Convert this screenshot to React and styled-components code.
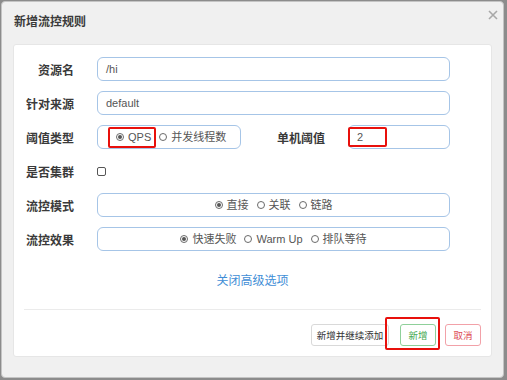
import styled, { createGlobalStyle } from "styled-components";

const GlobalStyle = createGlobalStyle`
  html, body {
    margin: 0;
    padding: 0;
    background: #8c8c8c;
  }
  * {
    box-sizing: border-box;
  }
`;

const CJK = `"Liberation Sans", "Noto Sans CJK SC", sans-serif`;

const Modal = styled.div`
  width: 503px;
  height: 377px;
  margin: 1px 0 0 1px;
  background: #f0f0f0;
  border: 1px solid #c4c4c4;
  border-radius: 4px;
  display: flex;
  flex-direction: column;
  padding: 0 11px 20px 11px;
  font-family: ${CJK};
`;

const Header = styled.div`
  height: 42px;
  display: flex;
  justify-content: space-between;
  align-items: flex-start;
`;

const Title = styled.h4`
  margin: 12px 0 0 1px;
  font-size: 12px;
  line-height: 16px;
  font-weight: 700;
  color: #3a3a3a;
`;

const Close = styled.button`
  border: none;
  background: none;
  padding: 0;
  margin: 8px -6px 0 0;
  width: 10px;
  height: 10px;
  display: flex;
  cursor: pointer;
`;

const Panel = styled.div`
  flex: 1;
  background: #fff;
  border: 1px solid #e6e6e6;
  border-radius: 3px;
  padding: 12px 10px 10px 10px;
  display: flex;
  flex-direction: column;
`;

const Form = styled.div`
  display: flex;
  flex-direction: column;
  gap: 10px;
  padding-right: 31px;
`;

const Row = styled.div`
  display: flex;
  align-items: center;
  height: 24px;
`;

const Label = styled.label`
  width: ${(p) => p.$width || 50}px;
  flex-shrink: 0;
  margin-right: 23px;
  text-align: right;
  font-size: 12px;
  font-weight: 700;
  color: #3a3a3a;
  white-space: nowrap;
`;

const Field = styled.div`
  flex: ${(p) => (p.$width ? "none" : 1)};
  width: ${(p) => (p.$width ? `${p.$width}px` : "auto")};
  height: 24px;
  border: 1px solid #a6c5e7;
  border-radius: 6px;
  display: flex;
  align-items: center;
  justify-content: ${(p) => (p.$center ? "center" : "flex-start")};
  padding-left: ${(p) => p.$pad ?? 8}px;
  gap: 8px;
  font-size: 11px;
  color: #555;
`;

const Marked = styled.span`
  position: relative;
  display: inline-flex;
  align-items: center;
  line-height: 14px;
  &::after {
    content: "";
    position: absolute;
    inset: ${(p) => p.$inset};
    border: 2px solid #e8100c;
    border-radius: 2px;
  }
`;

const Option = styled.span`
  display: inline-flex;
  align-items: center;
  gap: 4px;
  font-size: 11px;
  line-height: 14px;
  color: #555;
  white-space: nowrap;
`;

const Dot = styled.span`
  width: 8px;
  height: 8px;
  border: 1px solid #6a6a6a;
  border-radius: 50%;
  display: inline-flex;
  align-items: center;
  justify-content: center;
  &::after {
    content: "";
    width: 4px;
    height: 4px;
    border-radius: 50%;
    background: ${(p) => (p.$on ? "#555" : "transparent")};
  }
`;

const Check = styled.span`
  width: 9px;
  height: 9px;
  border: 1px solid #555;
  border-radius: 2px;
  background: #fff;
`;

const Toggle = styled.a`
  margin-top: 22px;
  height: 16px;
  line-height: 16px;
  text-align: center;
  font-size: 12px;
  color: #3f8ed6;
  cursor: pointer;
`;

const Divider = styled.hr`
  margin: 20px 0 0 0;
  border: none;
  border-top: 1px solid #ebebeb;
`;

const Footer = styled.div`
  margin-top: 14px;
  display: flex;
  justify-content: flex-end;
  align-items: center;
`;

const tones = {
  plain: { border: "#d9d9d9", color: "#333" },
  ok: { border: "#8fd09a", color: "#45a84f" },
  cancel: { border: "#f2a1a8", color: "#dc4a54" },
};

const Button = styled.button`
  width: ${(p) => p.$width}px;
  height: 22px;
  margin-left: ${(p) => p.$gap || 0}px;
  padding: 0;
  background: #fff;
  border: 1px solid ${(p) => tones[p.$tone].border};
  color: ${(p) => tones[p.$tone].color};
  border-radius: 3px;
  font-family: ${CJK};
  font-size: 9.5px;
  cursor: pointer;
`;

const Radio = ({ on, children }) => (
  <Option>
    <Dot $on={on} />
    {children}
  </Option>
);

export default function App() {
  return (
    <>
      <GlobalStyle />
      <Modal>
        <Header>
          <Title>新增流控规则</Title>
          <Close aria-label="close">
            <svg width="10" height="10" viewBox="0 0 10 10">
              <path d="M1 1L9 9M9 1L1 9" stroke="#a8a8a8" strokeWidth="1.6" />
            </svg>
          </Close>
        </Header>
        <Panel>
          <Form>
            <Row>
              <Label>资源名</Label>
              <Field>/hi</Field>
            </Row>
            <Row>
              <Label>针对来源</Label>
              <Field>default</Field>
            </Row>
            <Row>
              <Label>阈值类型</Label>
              <Field $width={144} $pad={18}>
                <Marked $inset="-3px -5px -4px -8px">
                  <Radio on>QPS</Radio>
                </Marked>
                <Radio>并发线程数</Radio>
              </Field>
              <Label $width={84}>单机阈值</Label>
              <Field $pad={8}>
                <Marked $inset="-3px -24px -3px -9px">2</Marked>
              </Field>
            </Row>
            <Row>
              <Label>是否集群</Label>
              <Check />
            </Row>
            <Row>
              <Label>流控模式</Label>
              <Field $center $pad={0}>
                <Radio on>直接</Radio>
                <Radio>关联</Radio>
                <Radio>链路</Radio>
              </Field>
            </Row>
            <Row>
              <Label>流控效果</Label>
              <Field $center $pad={0}>
                <Radio on>快速失败</Radio>
                <Radio>Warm Up</Radio>
                <Radio>排队等待</Radio>
              </Field>
            </Row>
          </Form>
          <Toggle>关闭高级选项</Toggle>
          <Divider />
          <Footer>
            <Button $tone="plain" $width={78}>新增并继续添加</Button>
            <Marked $inset="-7px -4px -4px -4px">
              <Button $tone="ok" $width={36} $gap={11}>新增</Button>
            </Marked>
            <Button $tone="cancel" $width={36} $gap={9}>取消</Button>
          </Footer>
        </Panel>
      </Modal>
    </>
  );
}
